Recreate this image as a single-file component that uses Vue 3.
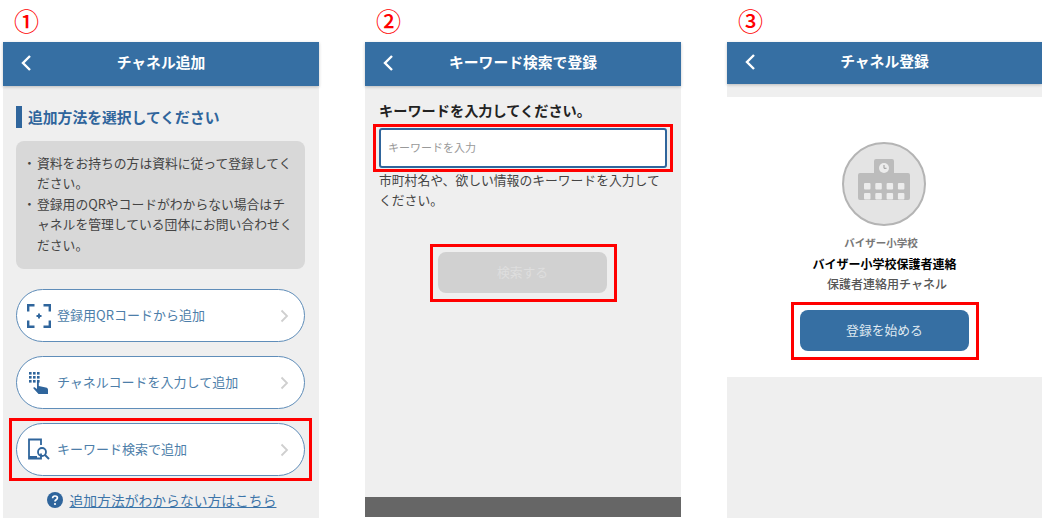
<script setup>
const options = [
  { label: '登録用QRコードから追加', icon: 'qr' },
  { label: 'チャネルコードを入力して追加', icon: 'keypad' },
  { label: 'キーワード検索で追加', icon: 'search', framed: true },
]
const keys = [0, 1, 2, 3, 4, 5, 6, 7, 8]
const windows = [0, 1, 2, 3, 4, 5, 6, 7]
</script>

<template>
  <div class="page">
    <section class="col">
      <div class="num">①</div>
      <div class="phone grey">
        <header class="bar">
          <svg class="back" width="12" height="18" viewBox="0 0 12 18"><path d="M10 2 3 9l7 7" /></svg>
          <h1>チャネル追加</h1>
        </header>
        <div class="body-one">
          <h2 class="section">追加方法を選択してください</h2>
          <div class="notes">
            <p>資料をお持ちの方は資料に従って登録してください。</p>
            <p>登録用のQRやコードがわからない場合はチャネルを管理している団体にお問い合わせください。</p>
          </div>
          <div class="options">
            <div v-for="o in options" :key="o.label" class="option" :class="{ framed: o.framed }">
              <span class="opt-icon">
                <svg v-if="o.icon === 'qr'" width="24" height="24" viewBox="0 0 24 24" fill="none" stroke="#2f659c" stroke-width="2.400">
                  <path d="M1.200 7.500V1.200h6.300M16.500 1.200h6.300v6.300M22.800 16.500v6.300h-6.300M7.500 22.800H1.200v-6.300" />
                  <path d="M12 9.500v5M9.500 12h5" stroke-width="1.900" />
                </svg>
                <svg v-else-if="o.icon === 'keypad'" width="20" height="22" viewBox="0 0 20 22" fill="#2f659c">
                  <rect v-for="k in keys" :key="k" :x="(k % 3) * 4" :y="Math.floor(k / 3) * 4" width="2.600" height="2.600" />
                  <path d="M8 8.500c0-1 1.800-1 1.800 0V14l7 1.500c1.500.4 2.200 1 2.200 2.200V22H9.500L4.500 16.500c-.5-1 .5-1.800 1.400-1.100L8 17z" />
                </svg>
                <svg v-else width="22" height="23" viewBox="0 0 22 23" fill="none" stroke="#2f659c">
                  <path d="M13 15.500V20.500H1V1.500H13V7" stroke-width="1.800" />
                  <rect x="1" y="18" width="8" height="3" fill="#2f659c" stroke="none" />
                  <circle cx="14" cy="14" r="4" stroke-width="1.800" />
                  <path d="m17 17 4 4" stroke-width="2" />
                </svg>
              </span>
              <span class="opt-label">{{ o.label }}</span>
              <svg class="chev" width="9" height="14" viewBox="0 0 9 14"><path d="m1.500 1.500 5.500 5.500-5.500 5.500" /></svg>
            </div>
          </div>
          <div class="help">
            <svg width="16" height="16" viewBox="0 0 16 16">
              <circle cx="8" cy="8" r="8" fill="#2f659c" />
              <path d="M5.600 6.200c.1-1.500 1.100-2.200 2.400-2.200s2.400.8 2.400 2c0 1.800-2.400 1.700-2.400 3.400" fill="none" stroke="#fff" stroke-width="1.700" />
              <circle cx="8" cy="12" r="1.100" fill="#fff" />
            </svg>
            <a>追加方法がわからない方はこちら</a>
          </div>
        </div>
      </div>
    </section>

    <section class="col">
      <div class="num">②</div>
      <div class="phone grey short">
        <header class="bar">
          <svg class="back" width="12" height="18" viewBox="0 0 12 18"><path d="M10 2 3 9l7 7" /></svg>
          <h1>キーワード検索で登録</h1>
        </header>
        <div class="body-two">
          <h2 class="prompt">キーワードを入力してください。</h2>
          <div class="field framed">キーワードを入力</div>
          <p class="hint">市町村名や、欲しい情報のキーワードを入力してください。</p>
          <div class="action disabled framed">検索する</div>
        </div>
        <div class="dark"></div>
      </div>
    </section>

    <section class="col">
      <div class="num">③</div>
      <div class="phone grey">
        <header class="bar thin">
          <svg class="back" width="12" height="18" viewBox="0 0 12 18"><path d="M10 2 3 9l7 7" /></svg>
          <h1>チャネル登録</h1>
        </header>
        <div class="card">
          <div class="avatar">
            <svg width="52" height="41" viewBox="0 0 52 41">
              <path d="M16 14V2a2 2 0 0 1 2-2h16a2 2 0 0 1 2 2v12h14a2 2 0 0 1 2 2v23a2 2 0 0 1-2 2H2a2 2 0 0 1-2-2V16a2 2 0 0 1 2-2z" fill="#bcbcbc" />
              <circle cx="26" cy="9" r="5" fill="#ececec" />
              <path d="M26 6v3.300h2.500" fill="none" stroke="#999" stroke-width="1" />
              <rect v-for="w in windows" :key="w" :x="6 + (w % 4) * 11.300" :y="24 + Math.floor(w / 4) * 10" width="6.500" height="6.500" rx="1" fill="#ececec" />
            </svg>
          </div>
          <div class="org">バイザー小学校</div>
          <div class="chan">バイザー小学校保護者連絡</div>
          <div class="sub">保護者連絡用チャネル</div>
          <div class="action primary framed">登録を始める</div>
        </div>
      </div>
    </section>
  </div>
</template>

<style>
html, body { margin: 0; background: #fff; }
</style>

<style scoped>
.page {
  display: flex;
  gap: 46px;
  height: 518px;
  padding-left: 3px;
  overflow: hidden;
  font-family: "Noto Sans CJK JP", "Noto Sans", sans-serif;
  color: #444;
}
.col { width: 316px; flex: none; display: flex; flex-direction: column; }
.col:last-child { width: 315px; }
.num { height: 42px; padding-left: 11px; box-sizing: border-box; color: #f00; font-size: 25px; font-weight: 500; line-height: 40px; }
.phone { flex: 1; display: flex; flex-direction: column; min-height: 0; }
.short { margin-bottom: 1px; }
.grey { background: #efefef; }
.bar {
  height: 44px;
  flex: none;
  background: #366fa3;
  display: flex;
  align-items: center;
  justify-content: center;
  position: relative;
  box-shadow: 0 1px 3px rgba(0, 0, 0, .22);
}
.bar.thin { height: 42px; }
.bar h1 { margin: 0 0 3px; color: #fff; font-size: 14.800px; font-weight: 700; line-height: 1; }
.back { position: absolute; left: 17px; top: 12px; fill: none; stroke: #fff; stroke-width: 2.400; }
.thin .back { top: 11px; }

.body-one { padding: 20px 14px 0 13px; }
.section {
  margin: 0;
  height: 22px;
  border-left: 6px solid #2f659c;
  padding-left: 6px;
  color: #2f659c;
  font-size: 14.800px;
  font-weight: 700;
  line-height: 21px;
}
.notes {
  margin-top: 13px;
  background: #d8d8d8;
  border-radius: 8px;
  padding: 12px 11px 0 21px;
  height: 128px;
  box-sizing: border-box;
  font-size: 12.800px;
  line-height: 20.400px;
}
.notes p { margin: 0; position: relative; }
.notes p::before { content: "・"; position: absolute; left: -14px; }
.options { margin-top: 20px; display: flex; flex-direction: column; gap: 14px; }
.option {
  height: 53px;
  box-sizing: border-box;
  border: 1px solid #5f8db9;
  border-radius: 27px;
  background: #fff;
  display: flex;
  align-items: center;
  color: #4d7ea9;
  font-size: 13px;
  position: relative;
}
.opt-icon { width: 40px; flex: none; display: flex; justify-content: center; padding-left: 4px; box-sizing: border-box; margin-right: -4px; }
.opt-label { flex: 1; padding: 0 0 3px 4px; }
.chev { margin-right: 15px; fill: none; stroke: #cfcfcf; stroke-width: 1.800; }
.framed::after {
  content: "";
  position: absolute;
  inset: -6px -8px -6px -8px;
  border: 3px solid #f00;
  pointer-events: none;
}
.help { margin-top: 14px; display: flex; align-items: center; justify-content: center; gap: 7px; padding-left: 2px; }
.help a { color: #3d75a9; font-size: 13.800px; line-height: 20px; text-decoration: underline; }

.body-two { flex: 1; padding: 14px 14px 0 14px; display: flex; flex-direction: column; }
.prompt { margin: 0 0 7px; color: #222; font-size: 14.200px; font-weight: 700; line-height: 21px; }
.field {
  position: relative;
  height: 40px;
  box-sizing: border-box;
  border: 2px solid #2f659c;
  border-radius: 3px;
  background: #fff;
  padding-left: 7px;
  color: #999;
  font-size: 11px;
  line-height: 34px;
}
.hint { margin: 2px 0 0; font-size: 12.800px; line-height: 20px; color: #444; }
.action {
  position: relative;
  width: 169px;
  height: 41px;
  flex: none;
  border-radius: 8px;
  text-align: center;
  font-size: 12.800px;
  line-height: 39px;
}
.disabled { margin: 42px 0 0 59px; background: #d1d1d1; color: #dedede; }
.disabled::after { inset: -8px -10px -9px -8px; }
.dark { height: 20px; flex: none; background: #666; }

.card {
  margin-top: 13px;
  height: 280px;
  background: #fff;
  display: flex;
  flex-direction: column;
  align-items: center;
  box-sizing: border-box;
  padding-top: 45px;
}
.avatar {
  width: 84px;
  height: 84px;
  margin-right: 2px;
  box-sizing: border-box;
  border: 2px solid #b4b4b4;
  border-radius: 50%;
  background: #e4e4e4;
  display: flex;
  align-items: center;
  justify-content: center;
  padding-bottom: 10px;
}
.org { margin-top: 9px; margin-right: 7px; color: #777; font-size: 10.500px; font-weight: 700; line-height: 16px; }
.chan { margin-top: 4px; color: #000; font-size: 12px; font-weight: 700; line-height: 18px; }
.sub { margin-top: 2px; margin-left: 5px; color: #555; font-size: 12px; font-weight: 500; line-height: 18px; }
.primary { margin-top: 17px; background: #366fa3; color: #dfe8f0; }
.primary::after { inset: -8px -10px -9px -9px; }
</style>
